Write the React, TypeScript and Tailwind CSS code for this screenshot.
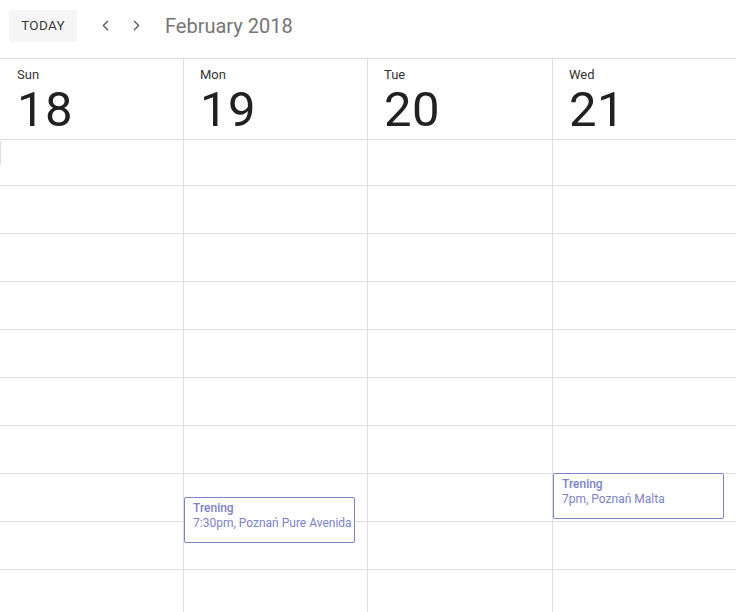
import React from "react";
import { ChevronLeft, ChevronRight } from "lucide-react";

const cols = [
  { name: "Sun", num: "18", w: "w-[184px]" },
  { name: "Mon", num: "19", w: "w-[184px]" },
  { name: "Tue", num: "20", w: "w-[185px]" },
  { name: "Wed", num: "21", w: "w-[183px]" },
];

const rowHeights = [46, 48, 48, 48, 48, 48, 48, 48, 48, 48, 48];

function Event({ top, line2 }: { top: string; line2: string }) {
  return (
    <div
      className={`absolute left-0 ${top} w-[171px] h-[46px] border border-[#7986cb] rounded-[2px] bg-white px-[8px] pt-[3px] text-[12px] leading-[15px] text-[#7b82c9] overflow-hidden whitespace-nowrap`}
    >
      <div className="font-medium">Trening</div>
      <div>{line2}</div>
    </div>
  );
}

export default function App() {
  return (
    <div
      className="w-[736px] h-[612px] overflow-hidden bg-white"
      style={{ fontFamily: "Roboto, 'Liberation Sans', sans-serif" }}
    >
      <div className="h-[58px] flex items-start pl-[9px] pt-[10px]">
        <button className="h-[32px] w-[68px] rounded-[3px] bg-[#f5f5f5] text-[13.5px] font-normal text-[#3a3a3a] tracking-[0.3px] pb-[1px]">
          TODAY
        </button>
        <div className="ml-[20px] h-[32px] flex items-center gap-[14px] text-[#5a5f6a] pb-[2px]">
          <ChevronLeft size={17} strokeWidth={2} />
          <ChevronRight size={17} strokeWidth={2} />
        </div>
        <div className="ml-[20px] h-[32px] flex items-center text-[20px] text-[#757575] leading-none pb-[1px]">
          February 2018
        </div>
      </div>
      <div className="flex border-t border-[#dddddd]">
        {cols.map((c, i) => (
          <div
            key={c.name}
            className={`${c.w} shrink-0 ${i < 3 ? "border-r border-[#dddddd]" : ""}`}
          >
            <div className={`h-[81px] border-b border-[#dddddd] ${i === 0 ? "pl-[17px]" : "pl-[16px]"} pt-[8px]`}>
              <div className="text-[13px] leading-[15px] text-[#333]">{c.name}</div>
              <div className="text-[49px] leading-[50px] text-[#212121] mt-[3px] tracking-[0.5px]">
                {c.num}
              </div>
            </div>
            <div className="relative">
              {rowHeights.map((h, r) => (
                <div
                  key={r}
                  className="border-b border-[#dddddd]"
                  style={{ height: h }}
                />
              ))}
              {i === 0 && (
                <div className="absolute left-0 top-[1px] w-[1px] h-[24px] bg-[#dddddd]" />
              )}
              {i === 1 && <Event top="top-[357px]" line2="7:30pm, Poznań Pure Avenida" />}
              {i === 3 && <Event top="top-[333px]" line2="7pm, Poznań Malta" />}
            </div>
          </div>
        ))}
      </div>
    </div>
  );
}
